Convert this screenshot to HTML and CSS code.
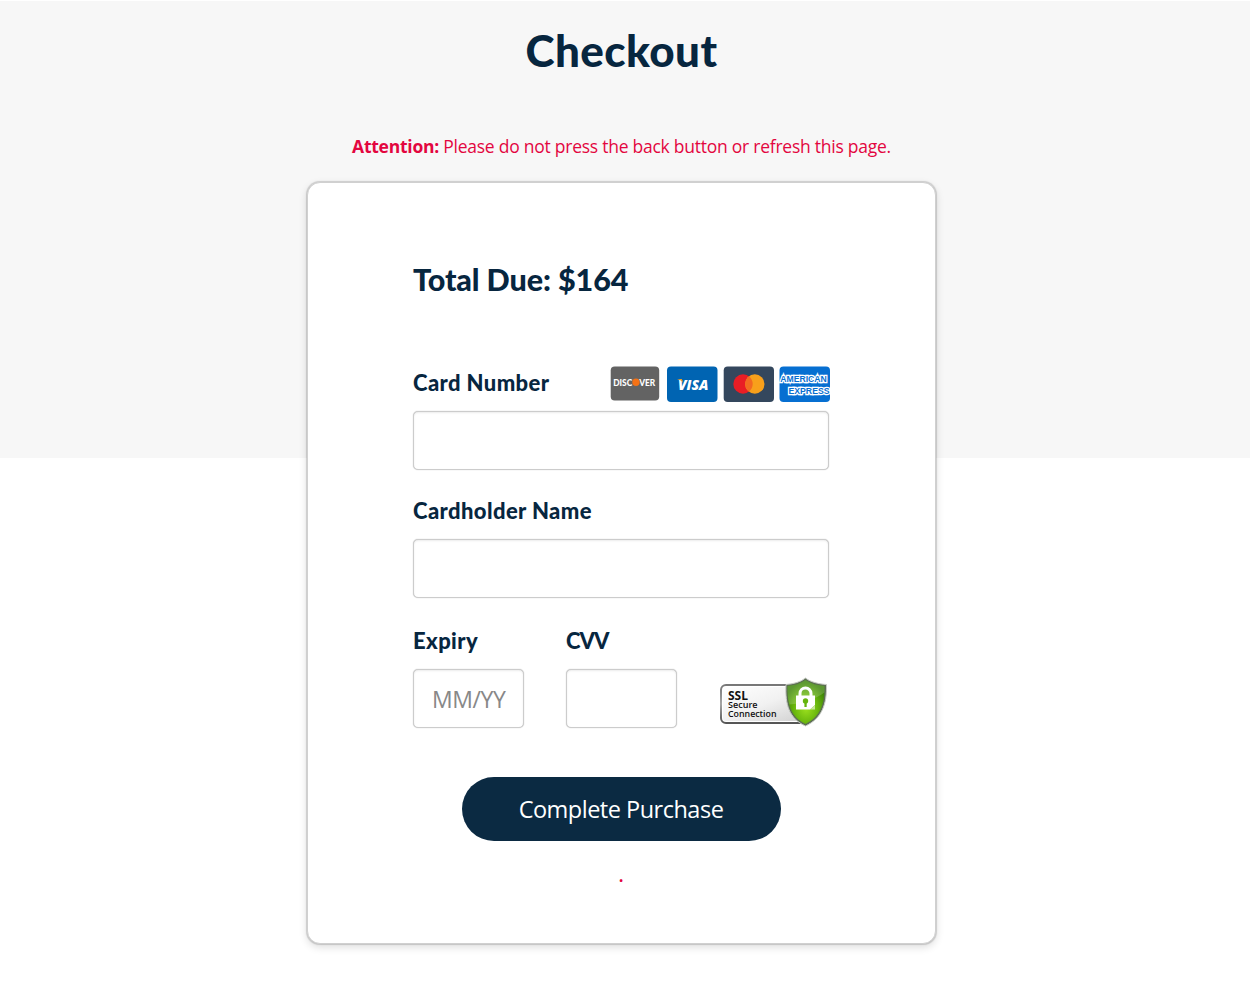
FILE: index.html
```html
<!DOCTYPE html>
<html lang="en">
<head>
    <meta charset="utf-8">
    <title>Checkout</title>
    <link rel="stylesheet" href="styles.css">
</head>
<body>
    <main class="page">
        <h1>Checkout</h1>
        <p class="notice"><strong>Attention:</strong> Please do not press the back button or refresh this page.</p>

        <form id="checkout">
            <h2>Total Due: $164</h2>

            <div class="label-row">
                <label for="number">Card Number</label>
                <svg class="cards" width="220" height="36" viewBox="0 0 220 36">
                    <!-- discover -->
                    <rect x="0.7" y="0.5" width="48.5" height="34" rx="4" fill="#636363"/>
                    <text class="discover" x="3.2" y="19.5" textLength="19" lengthAdjust="spacingAndGlyphs">DISC</text>
                    <text class="discover" x="29.2" y="19.5" textLength="16" lengthAdjust="spacingAndGlyphs">VER</text>
                    <circle cx="26" cy="16.3" r="3.7" fill="#f47216"/>
                    <!-- visa -->
                    <rect x="57" y="0.5" width="50.5" height="35.5" rx="4" fill="#0064b2"/>
                    <text class="visa" x="68" y="23.5" textLength="30.5" lengthAdjust="spacingAndGlyphs">VISA</text>
                    <path d="M67.5 13h4.300l1.700 4.300c-1.200-2-3.200-3.400-6-4z" fill="#f3a01f"/>
                    <!-- mastercard -->
                    <rect x="113.7" y="0.5" width="50.3" height="35.5" rx="4" fill="#34475d"/>
                    <circle cx="133" cy="18" r="9.7" fill="#e91d25"/>
                    <circle cx="144.8" cy="18" r="9.7" fill="#f8a01b"/>
                    <path d="M138.900 10.300a9.700 9.700 0 0 1 0 15.400a9.700 9.700 0 0 1 0-15.400z" fill="#f26a21"/>
                    <!-- amex -->
                    <rect x="169.5" y="0.5" width="50.5" height="35.5" rx="4" fill="#066fd1"/>
                    <text class="amex" x="170.300" y="16.300" textLength="46.500" lengthAdjust="spacingAndGlyphs">AMERICAN</text>
                    <text class="amex" x="178.500" y="28.200" textLength="41" lengthAdjust="spacingAndGlyphs">EXPRESS</text>
                </svg>
            </div>
            <input type="text" id="number">

            <div class="label-row name-row">
                <label for="name">Cardholder Name</label>
            </div>
            <input type="text" id="name">

            <div class="details">
                <div class="field">
                    <label for="expiry">Expiry</label>
                    <input type="text" id="expiry" placeholder="MM/YY">
                </div>
                <div class="field">
                    <label for="cvv" class="cvv">CVV</label>
                    <input type="text" id="cvv">
                </div>
                <svg class="ssl" width="112" height="52" viewBox="0 0 112 52">
                    <defs>
                        <linearGradient id="plate" x1="0" y1="0" x2="1" y2="1">
                            <stop offset="0" stop-color="#fff"/>
                            <stop offset="0.5" stop-color="#f1f1f1"/>
                            <stop offset="1" stop-color="#cfcfcf"/>
                        </linearGradient>
                        <linearGradient id="edge" x1="0" y1="0" x2="0" y2="1">
                            <stop offset="0" stop-color="#777"/>
                            <stop offset="0.5" stop-color="#a5a5a5"/>
                            <stop offset="1" stop-color="#555"/>
                        </linearGradient>
                        <radialGradient id="green" cx="0.5" cy="0.65" r="0.6">
                            <stop offset="0" stop-color="#9be01e"/>
                            <stop offset="0.5" stop-color="#6dba0e"/>
                            <stop offset="1" stop-color="#3a8205"/>
                        </radialGradient>
                    </defs>
                    <rect x="2" y="9" width="88" height="38" rx="5" fill="#fff" stroke="url(#edge)" stroke-width="2"/>
                    <rect x="4" y="11" width="84" height="34" rx="3" fill="url(#plate)"/>
                    <text class="ssl-title" x="9" y="23.7" textLength="20" lengthAdjust="spacingAndGlyphs">SSL</text>
                    <text class="ssl-text" x="9" y="32.4" textLength="29.5" lengthAdjust="spacingAndGlyphs">Secure</text>
                    <text class="ssl-text" x="9" y="41.4" textLength="48.5" lengthAdjust="spacingAndGlyphs">Connection</text>
                    <g transform="translate(-1 0)">
                        <path d="M87.500 2c-5 4-12 6-19.500 6.500c-1 20 3 34 19.500 41.500c16.500-7.500 21.500-22 21-41.500c-8-.5-16-2.500-21-6.500z" fill="#5c6d53" stroke="#c9cdc6" stroke-width="1"/>
                        <path d="M87.500 4c-5 3.500-11.500 5.500-18 6c-.5 18.500 3.500 31 18 38c14.500-7 19.500-20 19-38c-7-.5-14-2.500-19-6z" fill="url(#green)"/>
                        <path d="M87.500 4c-5 3.500-11.500 5.500-18 6c-.3 7 .3 13 2 18.500c13-1 25-5 35-12v-6.500c-7-.5-14-2.500-19-6z" fill="#fff" opacity="0.18"/>
                        <path d="M82 21v-3.500a5.500 5.500 0 0 1 11 0v3.500" fill="none" stroke="#fff" stroke-width="3"/>
                        <path d="M78 19.500h19v9.500l-5 4.500h-14z" fill="#fff"/>
                        <path d="M97 29l-5 4.500h5z" fill="#c8e79c"/>
                        <circle cx="87.5" cy="25" r="2.700" fill="#65b50d"/>
                        <path d="M86.400 26h2.300v5h-2.300z" fill="#65b50d"/>
                    </g>
                </svg>
            </div>

            <button type="submit">Complete Purchase</button>
            <p class="error">.</p>
        </form>
    </main>
</body>
</html>
```
FILE: styles.css
```css
* {
    box-sizing: border-box;
}
body {
    margin: 0;
    height: 997px;
    background: linear-gradient(#fff 1px, #f7f7f7 1px, #f7f7f7 458px, #fff 458px);
    color: #07263f;
    font-family: "Open Sans", sans-serif;
    overflow: hidden;
}
.page {
    display: flex;
    flex-direction: column;
    align-items: center;
    padding-right: 7px;
}
h1, h2, label {
    font-family: Lato, sans-serif;
    font-weight: 900;
}
h1 {
    margin: 20px 0 0;
    font-size: 44px;
    line-height: 60px;
    letter-spacing: 0.4px;
}
.notice {
    margin: 54px 0 0;
    color: #e3063f;
    font-size: 17.5px;
    line-height: 24px;
    letter-spacing: -0.25px;
}
#checkout {
    width: 629px;
    height: 762px;
    margin-top: 24px;
    padding: 76px 106px 0 105px;
    background: #fff;
    border: 1px solid #d0d0d0;
    border-radius: 13px;
    box-shadow: 0 0 1px 0.5px rgba(0,0,0,0.15), 0 3px 8px rgba(0,0,0,0.14);
}
h2 {
    margin: 0;
    font-size: 30.5px;
    line-height: 40px;
    letter-spacing: -0.1px;
}
label {
    font-size: 22px;
    line-height: 30px;
    letter-spacing: 0.4px;
}
.label-row {
    display: flex;
    justify-content: space-between;
    height: 44px;
    margin-top: 68px;
    padding-top: 1px;
}
.name-row {
    margin-top: 25px;
}
.cards {
    margin-top: -2px;
    margin-right: -1px;
}
.discover {
    fill: #fff;
    font: 900 9px Lato, sans-serif;
}
.visa {
    fill: #fff;
    font: italic 900 14.5px "Open Sans", sans-serif;
}
.amex {
    fill: #066fd1;
    stroke: #fff;
    stroke-width: 2.5px;
    paint-order: stroke;
    font: bold 9px "Liberation Sans", sans-serif;
}
input {
    display: block;
    width: 100%;
    height: 59px;
    padding: 0 17px 0 18px;
    background: #fff;
    border: 1px solid #ccc;
    border-radius: 5px;
    box-shadow: 0 0 1px rgba(0,0,0,0.3), inset 0 1px 2px rgba(0,0,0,0.08);
    color: #07263f;
    font: 23px "Open Sans", sans-serif;
    letter-spacing: -0.4px;
}
input::placeholder {
    color: #888;
}
.details {
    display: flex;
    margin-top: 28px;
}
.field {
    width: 111px;
    margin-right: 42px;
}
.field label {
    display: block;
    margin-bottom: 13px;
}
.field .cvv {
    letter-spacing: -1px;
}
#expiry {
    padding-right: 0;
}
.ssl {
    margin-top: 50px;
    margin-right: -2px;
}
.ssl-title {
    fill: #111;
    font: bold 12px "Open Sans", sans-serif;
}
.ssl-text {
    fill: #111;
    font: 600 9px "Open Sans", sans-serif;
}
button {
    display: block;
    width: 319px;
    height: 64px;
    margin: 49px auto 0;
    padding: 0 0 1px;
    background: #0b2a42;
    border: 0;
    border-radius: 32px;
    color: #fff;
    font: 23.5px "Open Sans", sans-serif;
    letter-spacing: -0.5px;
}
.error {
    margin: 22px 0 0;
    color: #e3063f;
    font-size: 19px;
    font-weight: 600;
    line-height: 24px;
    text-align: center;
}
```
